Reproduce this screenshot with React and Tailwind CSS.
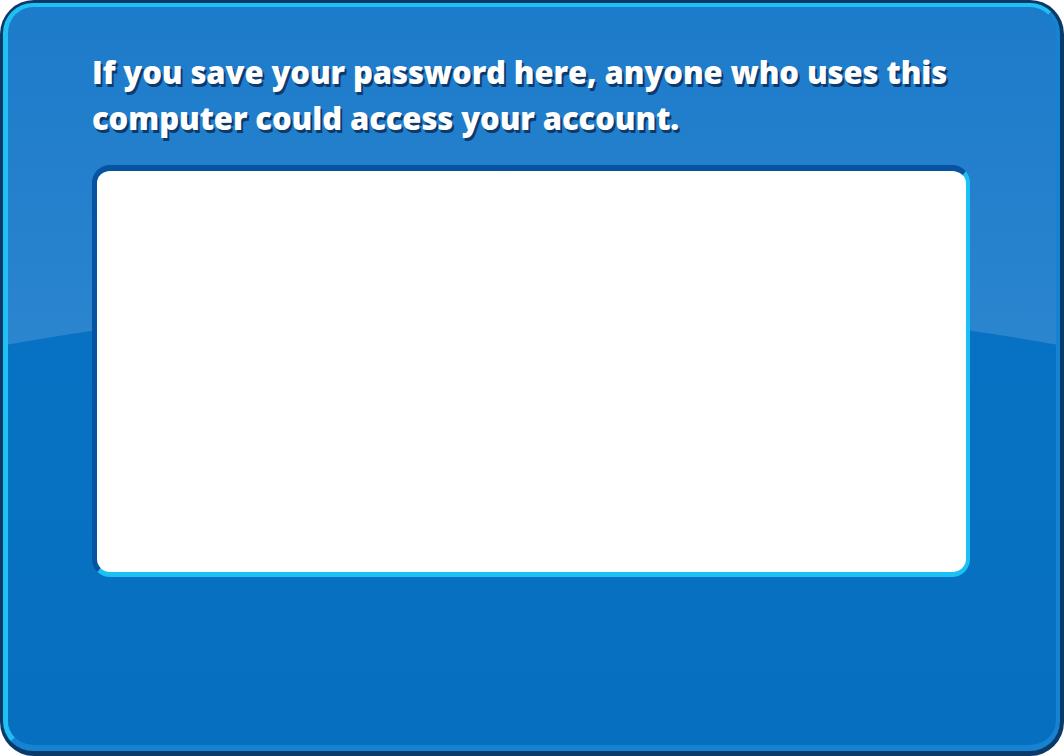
export default function App() {
  return (
    <div className="w-[1064px] h-[756px] bg-white">
      <div className="w-full h-full rounded-[34px] bg-[#0b3968] pt-[3px] pl-[3px] pr-[4px] pb-[5px]">
        <div className="relative w-full h-full overflow-hidden rounded-[30px] border-t-[4px] border-l-[5px] border-r-[4px] border-b-[6px] border-t-[#1fc0f3] border-l-[#1fc0f3] border-r-[#1682d2] border-b-[#1682d2] bg-gradient-to-b from-[#1c7bca] to-[#3a90d4]">
          {/* lower half under the gloss */}
          <div className="absolute left-[-676px] top-[293px] w-[2400px] h-[886px] rounded-[50%] bg-gradient-to-b from-[#0772c3] to-[#066cbd]" />
          <div className="relative flex flex-col px-[84px] pt-[42px]">
            <p className="font-['Open_Sans',sans-serif] font-extrabold text-white text-[31px] leading-[46px] tracking-[-0.1px] [text-shadow:2px_3px_0_#0c3a6c]">
              If you save your password here, anyone who uses this
              <br />
              computer could access your account.
            </p>
            <div className="mt-[24px] h-[412px] w-[878px] rounded-[18px] border-t-[6px] border-l-[5px] border-r-[4px] border-b-[5px] border-t-[#0553a1] border-l-[#0553a1] border-r-[#1cc1f4] border-b-[#1cc1f4] bg-white" />
          </div>
        </div>
      </div>
    </div>
  );
}
